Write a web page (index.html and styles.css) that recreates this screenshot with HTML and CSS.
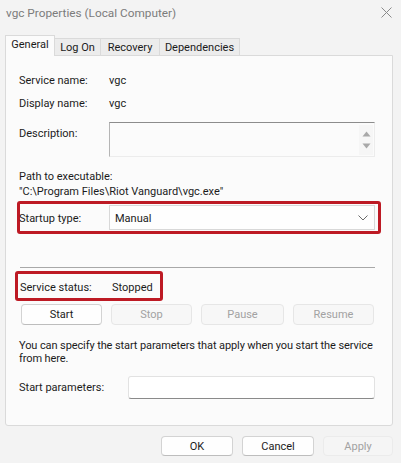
FILE: index.html
```html
<!DOCTYPE html>
<html>
<head>
<meta charset="utf-8">
<link rel="stylesheet" href="styles.css">
</head>
<body>
<div class="win">
  <div class="titlebar">
    <span class="title">vgc Properties (Local Computer)</span>
    <svg class="close" width="11" height="11" viewBox="0 0 11 11"><path d="M0.5 0.5L10.5 10.5M10.5 0.5L0.5 10.5" stroke="#8a8a8a" stroke-width="1" fill="none"/></svg>
  </div>
  <div class="tabs">
    <div class="tab sel">General</div>
    <div class="tab t2">Log On</div>
    <div class="tab t3">Recovery</div>
    <div class="tab t4">Dependencies</div>
  </div>
  <div class="panel">
    <div class="row r1"><span class="lbl">Service name:</span><span>vgc</span></div>
    <div class="row r2"><span class="lbl">Display name:</span><span>vgc</span></div>
    <div class="desc-row">
      <span class="lbl desc-lbl">Description:</span>
      <div class="desc-box">
        <div class="scroll">
          <svg width="9" height="6" viewBox="0 0 9 6"><path d="M4.5 0.5L8.5 5.5H0.5Z" fill="#a8a8a8"/></svg>
          <svg width="9" height="6" viewBox="0 0 9 6"><path d="M0.5 0.5H8.5L4.5 5.5Z" fill="#a8a8a8"/></svg>
        </div>
      </div>
    </div>
    <div class="path">
      <div>Path to executable:</div>
      <div>"C:\Program Files\Riot Vanguard\vgc.exe"</div>
    </div>
    <div class="hl hl-startup">
      <span class="lbl startup-lbl">Startup type:</span>
      <div class="select">
        <span>Manual</span>
        <svg width="10" height="6" viewBox="0 0 10 6"><path d="M0.5 0.5L5 5L9.5 0.5" stroke="#6a6a6a" stroke-width="1" fill="none"/></svg>
      </div>
    </div>
    <div class="sep"></div>
    <div class="hl hl-status">
      <span class="lbl status-lbl">Service status:</span><span>Stopped</span>
    </div>
    <div class="btnrow">
      <div class="btn">Start</div>
      <div class="btn dis">Stop</div>
      <div class="btn dis">Pause</div>
      <div class="btn dis">Resume</div>
    </div>
    <div class="note">You can specify the start parameters that apply when you start the service from here.</div>
    <div class="params">
      <span class="plbl">Start parameters:</span>
      <div class="input"></div>
    </div>
  </div>
  <div class="footer">
    <div class="fbtn">OK</div>
    <div class="fbtn">Cancel</div>
    <div class="fbtn dis">Apply</div>
  </div>
</div>
</body>
</html>
```
FILE: styles.css
```css
* { box-sizing: border-box; }
html, body { margin: 0; padding: 0; }
body {
  width: 401px;
  height: 463px;
  background: #f3f3f3;
  font-family: Roboto, "Liberation Sans", sans-serif;
  font-size: 11px;
  color: #1b1b1b;
  overflow: hidden;
}
.win { display: flex; flex-direction: column; height: 463px; }
.titlebar {
  height: 26px;
  display: flex;
  align-items: center;
  justify-content: space-between;
  padding: 0 9px 0 6px;
}
.title { font-size: 11.8px; color: #7c7c7c; }
.close { margin-top: -2px; }
.tabs {
  height: 29px;
  display: flex;
  align-items: flex-end;
  padding-left: 5px;
}
.tab {
  height: 17px;
  border: 1px solid #dadada;
  border-bottom: none;
  border-left: none;
  background: #ececec;
  display: flex;
  align-items: center;
  justify-content: center;
  padding-top: 1px;
}
.tab.sel {
  width: 50px;
  height: 21px;
  background: #fbfbfb;
  border-left: 1px solid #dadada;
  padding: 0 0 3px 0;
  margin-bottom: -1px;
  position: relative;
  z-index: 1;
}
.t2 { width: 46px; }
.t3 { width: 59px; }
.t4 { width: 80px; }
.panel {
  margin: 0 8px 0 5px;
  height: 371px;
  border: 1px solid #dadada;
  border-radius: 0 0 3px 3px;
  background: #fbfbfb;
  padding: 0 17px 0 13px;
  display: flex;
  flex-direction: column;
}
.row { display: flex; align-items: center; height: 20px; }
.lbl { width: 90px; flex: none; }
.r1 { margin-top: 14px; }
.r2 { margin-top: 3px; }
.desc-row { display: flex; margin-top: 9px; height: 35px; }
.desc-lbl { padding-top: 5px; }
.desc-box {
  flex: 1;
  border-top: 1px solid #8c8c8c;
  border-left: 1px solid #b5b5b5;
  border-bottom: 1px solid #ececec;
  border-right: 1px solid #ececec;
  display: flex;
  justify-content: flex-end;
}
.scroll {
  width: 14px;
  margin: 2px 1px 1px 0;
  background: #f6f6f6;
  display: flex;
  flex-direction: column;
  align-items: center;
  justify-content: space-between;
  padding: 6px 0 6px;
}
.path { margin-top: 12px; line-height: 15px; }
.hl {
  border: 3px solid #bd1a24;
  border-radius: 3px;
  display: flex;
  align-items: center;
}
.hl-startup {
  margin: 2px -6px 0 -2px;
  height: 33px;
  padding: 0 3px 0 0;
}
.startup-lbl { width: 90px; margin-left: -1px; padding-top: 2px; }
.select {
  flex: 1;
  height: 25px;
  background: #fefefe;
  border: 1px solid #d8d8d8;
  display: flex;
  align-items: center;
  justify-content: space-between;
  padding: 1px 6px 0 5px;
}
.sep {
  margin-top: 33px;
  height: 1px;
  background: #a8a8a8;
  margin-left: 1px;
}
.hl-status {
  margin: 3px 0 0 -4px;
  width: 148px;
  height: 30px;
  padding: 2px 0 0 2px;
}
.status-lbl { width: 92px; }
.btnrow { display: flex; gap: 9px; margin-top: 3px; padding-left: 2px; }
.btn {
  width: 81px;
  height: 21px;
  border: 1px solid #d3d3d3;
  border-bottom-color: #bdbdbd;
  border-radius: 4px;
  background: #fefefe;
  display: flex;
  align-items: center;
  justify-content: center;
}
.btn.dis {
  background: #f7f7f7;
  border-color: #e6e6e6;
  color: #a2a2a2;
}
.btn:nth-child(3) { width: 83px; }
.note {
  margin: 14px -8px 0 0;
  line-height: 13px;
  letter-spacing: -0.1px;
}
.params { display: flex; align-items: center; margin-top: 11px; }
.plbl { width: 109px; flex: none; }
.input {
  flex: 1;
  height: 23px;
  background: #ffffff;
  border: 1px solid #e2e2e2;
  border-bottom: 1px solid #8a8a8a;
  border-radius: 3px;
}
.footer {
  display: flex;
  justify-content: flex-end;
  gap: 9px;
  margin-top: 10px;
  padding-right: 8px;
}
.fbtn {
  height: 20px;
  width: 72px;
  border: 1px solid #d3d3d3;
  border-bottom-color: #bdbdbd;
  border-radius: 4px;
  background: #fefefe;
  display: flex;
  align-items: center;
  justify-content: center;
}
.fbtn.dis {
  width: 70px;
  background: #f5f5f5;
  border-color: #ebebeb;
  color: #a2a2a2;
}
```
